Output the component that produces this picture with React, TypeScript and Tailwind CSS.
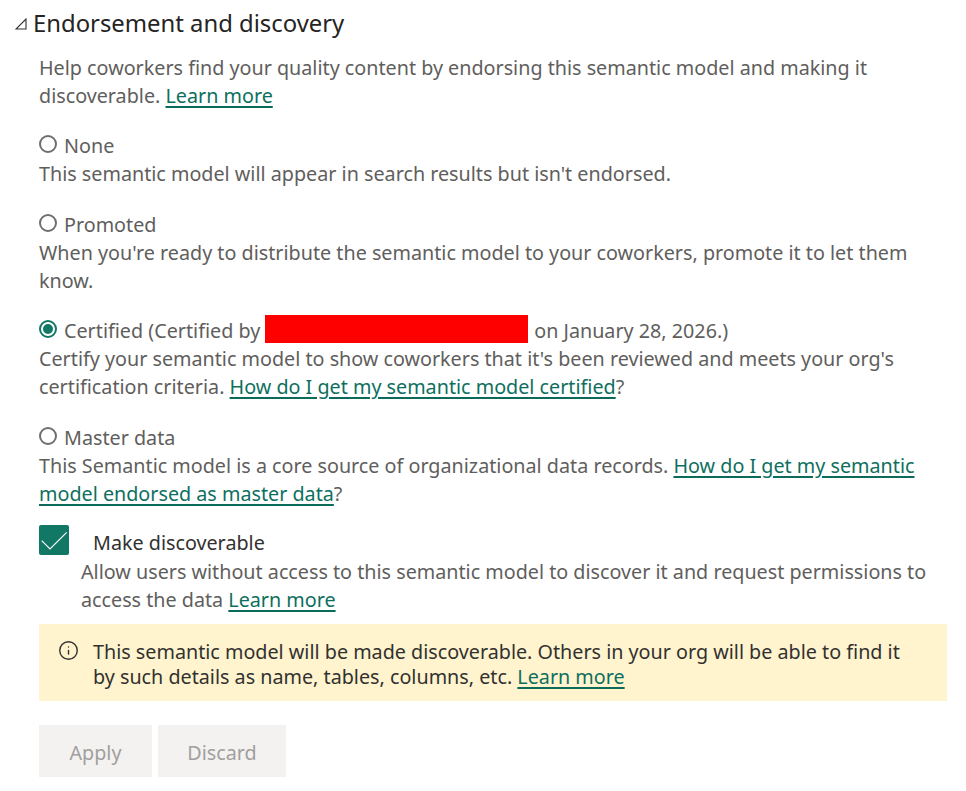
import { Info } from "lucide-react";

const linkClass = "text-[#0e6f5e] underline decoration-[#0b6a5a] decoration-2 underline-offset-[3px]";

function Radio({ checked }: { checked?: boolean }) {
  return (
    <span
      className={`flex h-[18px] w-[18px] shrink-0 items-center justify-center rounded-full border-2 ${
        checked ? "border-[#117865]" : "border-[#6f6f6f]"
      }`}
    >
      {checked && <span className="h-[10px] w-[10px] rounded-full bg-[#117865]" />}
    </span>
  );
}

function Option({
  label,
  checked,
  children,
  className,
}: {
  label: React.ReactNode;
  checked?: boolean;
  children: React.ReactNode;
  className?: string;
}) {
  return (
    <div className={className}>
      <div className="flex h-[28px] items-center gap-[7px] text-[#605e5c]">
        <span className="-mt-1">
          <Radio checked={checked} />
        </span>
        <div className="flex items-center">{label}</div>
      </div>
      <p className="text-[#605e5c]">{children}</p>
    </div>
  );
}

export default function App() {
  return (
    <div
      className="h-[791px] w-[966px] overflow-hidden bg-white pl-[15px] pt-[9px] text-[19.74px] leading-[28px]"
      style={{ fontFamily: '"Noto Sans", "Open Sans", sans-serif' }}
    >
      <div className="flex items-center gap-[6px]">
        <svg width="12" height="12" viewBox="0 0 12 12" className="mt-[2px] shrink-0" fill="none">
          <path d="M11 1V11H1Z" stroke="#323130" strokeWidth="1.1" />
        </svg>
        <h2 className="text-[23.85px] leading-[28px] font-normal text-[#252423]">Endorsement and discovery</h2>
      </div>

      <div className="ml-[24px] mt-[17px] w-[908px]">
        <p className="text-[#605e5c]">
          Help coworkers find your quality content by endorsing this semantic model and making it
          <br />
          discoverable. <a className={linkClass}>Learn more</a>
        </p>

        <Option label="None" className="mt-[22px]">
          This semantic model will appear in search results but isn't endorsed.
        </Option>

        <Option label="Promoted" className="mt-[23px]">
          When you're ready to distribute the semantic model to your coworkers, promote it to let them
          <br />
          know.
        </Option>

        <Option
          checked
          className="mt-[22px]"
          label={
            <>
              <span>Certified (Certified by</span>
              <span className="mb-[4px] ml-[5px] h-[28px] w-[263px] bg-[#ff0000]" />
              <span className="ml-[6px]">on January 28, 2026.)</span>
            </>
          }
        >
          Certify your semantic model to show coworkers that it's been reviewed and meets your org's
          <br />
          certification criteria. <a className={linkClass}>How do I get my semantic model certified</a>?
        </Option>

        <Option label="Master data" className="mt-[23px]">
          This Semantic model is a core source of organizational data records.{" "}
          <a className={linkClass}>
            How do I get my semantic
            <br />
            model endorsed as master data
          </a>
          ?
        </Option>

        <div className="mt-[21px] flex">
          <span className="-mt-[4px] flex h-[30px] w-[30px] shrink-0 items-center justify-center rounded-[2px] bg-[#117865]">
            <svg width="30" height="30" viewBox="0 0 30 30" fill="none">
              <path d="M2.7 15.7L11 24L27.7 7.3" stroke="#ffffff" strokeWidth="1.2" />
            </svg>
          </span>
          <div className="ml-[12px]">
            <div className="ml-[12px] h-[29px] text-[#323130]">Make discoverable</div>
            <p className="text-[#605e5c]">
              Allow users without access to this semantic model to discover it and request permissions to
              <br />
              access the data <a className={linkClass}>Learn more</a>
            </p>
          </div>
        </div>

        <div className="mt-[10px] flex h-[77px] items-center bg-[#fff4ce] pl-[19px] pt-[3px] text-[#323130]">
          <Info size={21} strokeWidth={1.6} className="-mt-[28px] shrink-0 text-[#323130]" />
          <p className="ml-[14px] leading-[25px]">
            This semantic model will be made discoverable. Others in your org will be able to find it
            <br />
            by such details as name, tables, columns, etc. <a className={linkClass}>Learn more</a>
          </p>
        </div>

        <div className="mt-[24px] flex gap-[6px]">
          <button className="h-[52px] w-[113px] bg-[#f3f2f1] pt-[3px] text-[#a19f9d]">Apply</button>
          <button className="h-[52px] w-[128px] bg-[#f3f2f1] pt-[3px] text-[#a19f9d]">Discard</button>
        </div>
      </div>
    </div>
  );
}
